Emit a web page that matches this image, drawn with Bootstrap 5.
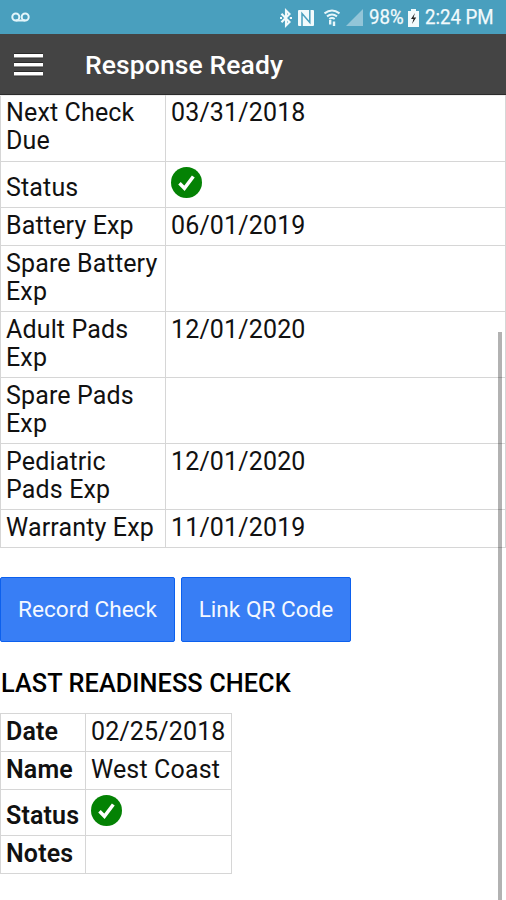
<!DOCTYPE html>
<html lang="en">
<head>
<meta charset="utf-8">
<meta name="viewport" content="width=device-width, initial-scale=1">
<title>Response Ready</title>
<link href="https://cdn.jsdelivr.net/npm/bootstrap@5.3.0/dist/css/bootstrap.min.css" rel="stylesheet">
<style>
body{font-family:Roboto,"Liberation Sans",sans-serif;font-size:25px;line-height:28px;color:#111;height:900px;overflow:hidden;letter-spacing:.15px}
.status-bar{height:34px;background:#499fbe;color:#f2fafc;font-size:20.5px;line-height:36px;letter-spacing:0;padding-right:11px}
.status-bar svg{display:block;flex:none;margin-top:1px}
.status-bar .voicemail{margin-left:11px;margin-top:-1px}
.squeeze{transform:scaleX(.91);transform-origin:left center;white-space:nowrap;flex:none;-webkit-text-stroke:.25px #f2fafc}
.signal{margin-left:4px}
.batt-level{width:39px;margin-left:5px}
.clock{width:70px;margin-left:6px}
.app-bar{height:61px;background:#444;border-bottom:1px solid #2b2b2b;color:#fff}
.app-bar h1{font-size:26.5px;font-weight:500;line-height:30px;letter-spacing:.1px;margin-left:42px;padding-top:1px}
.menu-btn{width:29px;height:24px;margin-left:14px;margin-top:1px}
.grid-table{border-collapse:collapse;color:#111;table-layout:fixed}
.grid-table>tbody>tr>*{border:1px solid #d6d6d6;padding:4px 5px 5px;height:38px;vertical-align:top;color:#111}
.grid-table>tbody>tr.two-line>*{height:66px}
.grid-table>tbody>tr.status-row>*{height:46px;padding-top:12px;padding-bottom:5px}
.grid-table>tbody>tr.status-row>td:last-child{padding-top:5px}
.grid-table>tbody>tr.first-row>*{border-top-color:#eee;padding-top:3px}
.grid-table svg{display:block}
.device{width:506px}
.device col:first-child{width:165px}
.last-check{width:232px}
.last-check col:first-child{width:85px}
.last-check th{font-weight:600}
.actions{margin-top:29px;gap:6px}
.btn-action{height:65px;background:#387ef5;border:1px solid #0c60ee;border-radius:2px;color:#f4f8ff;font-size:22.6px;line-height:28px;padding:1px 0 0;letter-spacing:0}
.btn-action:hover{background:#0c60ee;color:#fff}
.record{width:175px}
.link-qr{width:170px}
h2.section-title{font-size:25.3px;font-weight:500;line-height:28px;color:#000;margin:28px 0 15px 1px;letter-spacing:.08px}
.scroll-thumb{position:absolute;right:4px;top:332px;width:4px;height:568px;background:rgba(0,0,0,.3)}
</style>
<script src="https://cdn.jsdelivr.net/npm/bootstrap@5.3.0/dist/js/bootstrap.bundle.min.js"></script>
</head>
<body class="bg-white position-relative">
<svg class="d-none" aria-hidden="true">
  <symbol id="ok" viewBox="0 0 30 30"><circle cx="15" cy="15" r="15" fill="#048204"/><path d="M8.2 15.8 13 20.6 21.6 9.2" fill="none" stroke="#fff" stroke-width="3.4"/></symbol>
</svg>
<div class="status-bar d-flex align-items-center">
  <svg class="voicemail me-auto" width="19" height="10" viewBox="0 0 19 10" fill="none" stroke="#e3f5fa" stroke-width="2"><circle cx="4.8" cy="5" r="3.5"/><circle cx="14.2" cy="5" r="3.5"/><path d="M4.8 8.5h9.4"/></svg>
  <svg width="14" height="20" viewBox="0 0 14 20" fill="none" stroke="#f2fafc" stroke-width="2.1"><path d="M2.5 5.8 10.5 14 7 17.4V2.6L10.5 6 2.5 14.2"/><path d="M1 10h2M10.8 10h2.2"/></svg>
  <svg class="ms-1" width="18" height="18" viewBox="0 0 18 18"><path d="M1 2q0-1 1-1h14q1 0 1 1v14q0 1-1 1H2q-1 0-1-1z" fill="#f2fafc"/><path d="M5 17V4.5L12.8 13.5V1" fill="none" stroke="#499fbe" stroke-width="1.5"/></svg>
  <svg class="ms-2" width="18" height="18" viewBox="0 0 18 18" fill="none" stroke="#e8f6fa" stroke-width="2"><path d="M1.5 4.4q7.5-5.6 15 0M4 7.4q5-3.8 10 0M6.3 10q2.7-2 5.4 0"/><path d="M7.2 11V15.5M11 12.5V17" stroke-width="2.4"/></svg>
  <svg class="signal" width="19" height="18" viewBox="0 0 19 18"><path d="M18 0v17H1z" fill="#92c5d8"/></svg>
  <span class="squeeze batt-level">98%</span>
  <svg width="11" height="18" viewBox="0 0 11 18"><path d="M3 0h5v2h3v16H0V2h3z" fill="#f2fafc"/><path d="M7 4 3 10h2.5L4 15l4.2-6.5H5.5z" fill="#222"/></svg>
  <span class="squeeze clock">2:24 PM</span>
</div>
<header class="app-bar d-flex align-items-center">
  <svg class="menu-btn" viewBox="0 0 29 24" role="img" aria-label="Menu"><path d="M0 .2h29v5H0zM0 9.2h29v5H0zM0 18.2h29v5H0z" fill="#222"/><path d="M0 1h29v3.6H0zM0 10h29v3.6H0zM0 19h29v3.6H0z" fill="#fff"/></svg>
  <h1 class="mb-0">Response Ready</h1>
</header>
<main>
  <table class="grid-table device mb-0">
    <colgroup><col><col></colgroup>
    <tbody>
      <tr class="two-line first-row"><td>Next Check<br>Due</td><td>03/31/2018</td></tr>
      <tr class="status-row"><td>Status</td><td><svg width="31" height="31" role="img" aria-label="OK"><use href="#ok"/></svg></td></tr>
      <tr><td>Battery Exp</td><td>06/01/2019</td></tr>
      <tr class="two-line"><td>Spare Battery<br>Exp</td><td></td></tr>
      <tr class="two-line"><td>Adult Pads<br>Exp</td><td>12/01/2020</td></tr>
      <tr class="two-line"><td>Spare Pads<br>Exp</td><td></td></tr>
      <tr class="two-line"><td>Pediatric<br>Pads Exp</td><td>12/01/2020</td></tr>
      <tr><td>Warranty Exp</td><td>11/01/2019</td></tr>
    </tbody>
  </table>
  <div class="actions d-flex">
    <button type="button" class="btn btn-action record">Record Check</button>
    <button type="button" class="btn btn-action link-qr">Link QR Code</button>
  </div>
  <h2 class="section-title">LAST READINESS CHECK</h2>
  <table class="grid-table last-check mb-0">
    <colgroup><col><col></colgroup>
    <tbody>
      <tr><th>Date</th><td>02/25/2018</td></tr>
      <tr><th>Name</th><td>West Coast</td></tr>
      <tr class="status-row"><th>Status</th><td><svg width="31" height="31" role="img" aria-label="OK"><use href="#ok"/></svg></td></tr>
      <tr><th>Notes</th><td></td></tr>
    </tbody>
  </table>
</main>
<div class="scroll-thumb"></div>
</body>
</html>
